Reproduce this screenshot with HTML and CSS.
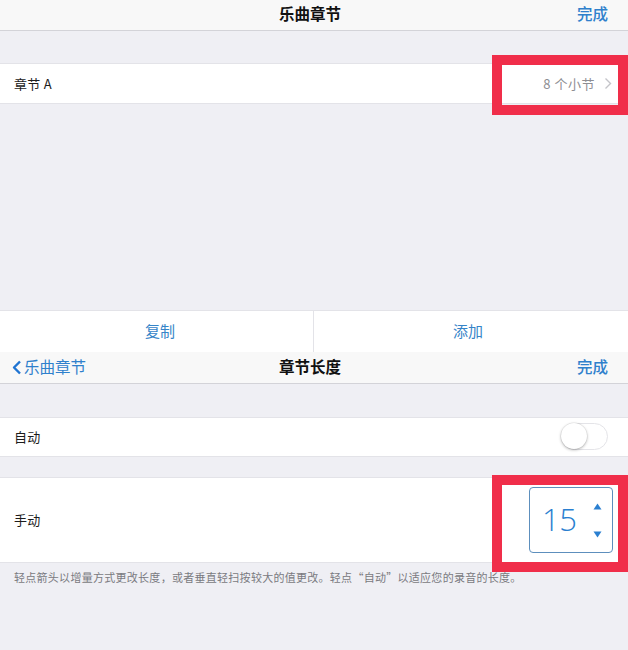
FILE: index.html
```html
<!DOCTYPE html>
<html lang="zh-CN">
<head>
<meta charset="utf-8">
<title>乐曲章节</title>
<link rel="stylesheet" href="styles.css">
</head>
<body>
<div class="screen">
  <header class="nav">
    <span class="nav-left"></span>
    <h1 class="nav-title">乐曲章节</h1>
    <span class="nav-action">完成</span>
  </header>
  <div class="gap gap-top"></div>
  <div class="row row-section">
    <span class="label">章节 A</span>
    <span class="detail">8 个小节
      <svg class="disclosure" width="8" height="13" viewBox="0 0 8 13"><path d="M1.5 1.5 L6.5 6.5 L1.5 11.5" fill="none" stroke="#c4c4c9" stroke-width="1.4"/></svg>
    </span>
  </div>
  <div class="gap gap-fill"></div>
  <div class="toolbar">
    <span class="tool tool-left">复制</span>
    <span class="tool tool-right">添加</span>
  </div>
  <header class="nav nav-second">
    <span class="nav-left back">
      <svg class="back-chevron" width="10" height="15" viewBox="0 0 10 15"><path d="M8 1.5 L2 7.5 L8 13.5" fill="none" stroke="#1f74d2" stroke-width="2.4" stroke-linejoin="round"/></svg>乐曲章节
    </span>
    <h1 class="nav-title">章节长度</h1>
    <span class="nav-action">完成</span>
  </header>
  <div class="gap gap-mid"></div>
  <div class="row row-auto">
    <span class="label">自动</span>
    <span class="switch"><span class="knob"></span></span>
  </div>
  <div class="gap gap-small"></div>
  <div class="row row-manual">
    <span class="label">手动</span>
    <span class="stepper">
      <span class="stepper-value">15</span>
      <span class="stepper-arrows">
        <svg width="9" height="7" viewBox="0 0 9 7"><path d="M4.5 0.5 L8.5 6.5 L0.5 6.5 Z" fill="#2a7fd0"/></svg>
        <svg width="9" height="7" viewBox="0 0 9 7"><path d="M0.5 0.5 L8.5 0.5 L4.5 6.5 Z" fill="#2a7fd0"/></svg>
      </span>
    </span>
  </div>
  <p class="footnote">轻点箭头以增量方式更改长度，或者垂直轻扫按较大的值更改。轻点“自动”以适应您的录音的长度。</p>

  <div class="highlight highlight-one"></div>
  <div class="highlight highlight-two"></div>
</div>
</body>
</html>
```

FILE: styles.css
```css
* { box-sizing: border-box; }
html, body { margin: 0; padding: 0; }
body {
  background: #efeff4;
  font-family: "Noto Sans CJK SC", "Noto Sans", "Liberation Sans", sans-serif;
  color: #1a1a1a;
}
.screen {
  position: relative;
  width: 628px;
  height: 650px;
  overflow: hidden;
  display: flex;
  flex-direction: column;
}
.nav {
  height: 31px;
  background: #f8f8f8;
  border-bottom: 1px solid #d3d3d8;
  display: grid;
  grid-template-columns: 1fr auto 1fr;
  align-items: center;
  padding: 0 20px 3px 12px;
  flex: none;
}
.nav-title {
  margin: 0;
  font-size: 15.5px;
  font-weight: 700;
  color: #111;
  line-height: 1;
}
.nav-action {
  justify-self: end;
  color: #2f80cc;
  font-size: 15.5px;
  font-weight: 500;
  line-height: 1;
}
.nav-left {
  justify-self: start;
}
.back {
  display: flex;
  align-items: center;
  gap: 2px;
  color: #2f80cc;
  font-size: 15.5px;
  line-height: 1;
}
.back-chevron { margin-top: 1px; }
.gap { flex: none; }
.gap-top { height: 32px; }
.gap-fill { height: 206px; }
.gap-mid { height: 33px; }
.gap-small { height: 20px; }
.row {
  flex: none;
  background: #fff;
  border-top: 1px solid #e3e3e8;
  border-bottom: 1px solid #e3e3e8;
  display: flex;
  align-items: center;
  justify-content: space-between;
  padding: 0 16px 1px 14px;
}
.label { font-size: 13px; color: #1c1c1c; letter-spacing: 0.3px; }
.row-section { height: 41px; }
.detail {
  display: flex;
  align-items: center;
  gap: 9px;
  font-size: 13px;
  color: #8e8e93;
  letter-spacing: 0.5px;
}
.toolbar {
  flex: none;
  height: 42px;
  background: #fff;
  border-top: 1px solid #e3e3e8;
  display: grid;
  grid-template-columns: 313px 1fr;
}
.tool {
  display: flex;
  align-items: center;
  justify-content: center;
  color: #3684c8;
  font-size: 15px;
  padding-bottom: 2px;
}
.tool-left { padding-left: 7px; }
.tool-right { padding-right: 6px; }
.tool + .tool { border-left: 1px solid #e3e3e8; }
.nav-second { height: 32px; padding-bottom: 2px; }
.row-auto { height: 40px; padding-right: 20px; }
.switch {
  position: relative;
  width: 47px;
  height: 27px;
  border-radius: 14px;
  border: 1.5px solid #e4e4e8;
  background: #fff;
}
.knob {
  position: absolute;
  left: -1px;
  top: -1px;
  width: 26px;
  height: 26px;
  border-radius: 50%;
  background: #fff;
  box-shadow: 0 1px 3px rgba(0,0,0,0.3), 0 0 0 0.5px rgba(0,0,0,0.08);
}
.row-manual { height: 86px; padding-right: 15px; }
.stepper {
  width: 84px;
  height: 66px;
  border: 1px solid #5d8fbd;
  border-radius: 4px;
  display: flex;
  align-items: center;
  padding: 0 10px 0 12px;
  justify-content: space-between;
}
.stepper-value {
  font-family: "Open Sans", "Noto Sans", sans-serif;
  font-weight: 300;
  font-size: 31px;
  color: #2a7fd0;
  letter-spacing: -0.5px;
  line-height: 1;
}
.stepper-arrows {
  display: flex;
  flex-direction: column;
  gap: 21px;
  padding-top: 2px;
}
.stepper-arrows svg { display: block; }
.footnote {
  margin: 6px 0 0 14px;
  font-size: 11px;
  color: #7a7a80;
  line-height: 16px;
  letter-spacing: 0.28px;
}
.highlight {
  position: absolute;
  border: 10px solid #f02e4a;
}
.highlight-one {
  left: 492px;
  top: 55px;
  width: 136px;
  height: 60px;
}
.highlight-two {
  left: 492px;
  top: 475px;
  width: 136px;
  height: 97px;
}
```
